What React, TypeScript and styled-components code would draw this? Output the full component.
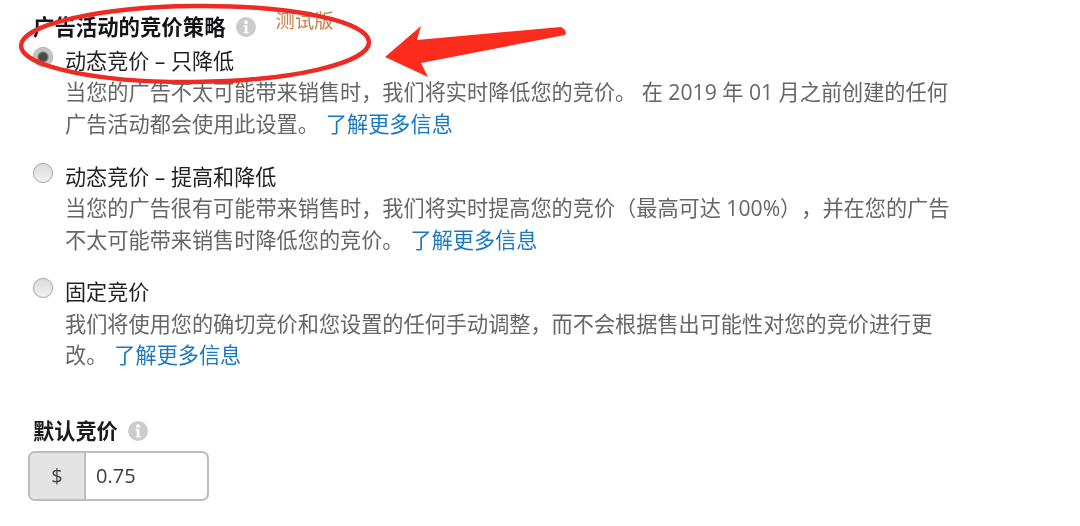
import React from "react"
import styled, { createGlobalStyle } from "styled-components"

const GlobalStyle = createGlobalStyle`
  html, body {
    margin: 0;
    padding: 0;
    background: #fff;
  }

  body {
    font-family: "Open Sans", "Noto Sans CJK SC", sans-serif;
    text-spacing-trim: space-all;
    overflow: hidden;
  }
`

const Page = styled.div`
  position: relative;
  width: 1080px;
  height: 526px;
  padding: 12px 0 0 33px;
  box-sizing: border-box;
  overflow: hidden;
`

const Content = styled.div`
  filter: blur(0.55px);
`

const TitleRow = styled.div`
  display: flex;
  align-items: center;
  height: 30px;
`

const Title = styled.h4`
  margin: 0;

  color: #141418;
  font-size: 21.4px;
  font-weight: 700;
  line-height: 30px;
`

const InfoIcon = styled.svg`
  flex: none;
  width: 20px;
  height: 20px;
  margin-left: 10px;
`

const BetaTag = styled.span`
  align-self: flex-start;
  margin: -3px 0 0 20px;

  color: #c9814a;
  font-size: 19.4px;
  line-height: 24px;
`

const OptionList = styled.div`
  display: flex;
  flex-direction: column;
  gap: 21.5px;
  margin-top: 3px;
`

const Option = styled.div`
  display: flex;
  gap: 12px;
`

const Radio = styled.span<{ $checked?: boolean }>`
  flex: none;
  width: 20px;
  height: 20px;
  margin-top: 2px;
  border-radius: 50%;
  box-sizing: border-box;
  border: 1px solid #aaa;
  background: ${({ $checked }) =>
    $checked
      ? "radial-gradient(circle, #4a4a4a 0 4px, #bdbdbd 6px, #e2e2e2 100%)"
      : "linear-gradient(#dcdcdc, #f0f0f0)"};
  box-shadow: 0 0 1px #bbb;
`

const OptionBody = styled.div`
  width: 892px;
`

const OptionLabel = styled.div`
  color: #1f1f1f;
  font-size: 21.1px;
  line-height: 31.4px;
`

const OptionText = styled.p`
  margin: 0;

  color: #666;
  font-size: 21.17px;
  line-height: 31.4px;
`

const MoreLink = styled.a`
  margin-left: 7px;

  color: #1a78c2;
  text-decoration: none;
`

const BidSection = styled.div`
  margin-top: 45px;
`

const BidLabelRow = styled.div`
  display: flex;
  align-items: center;
  height: 30px;
`

const BidLabel = styled.h4`
  margin: 0;

  color: #1d1820;
  font-size: 21.2px;
  font-weight: 700;
  line-height: 30px;
`

const BidInput = styled.div`
  display: flex;
  width: 181px;
  height: 50px;
  margin: 5px 0 0 -5px;
  box-sizing: border-box;

  border: 2px solid #bdbdbd;
  border-radius: 7px;
  overflow: hidden;
`

const Currency = styled.span`
  display: flex;
  align-items: center;
  justify-content: center;
  width: 54px;

  background: #e4e4e4;
  border-right: 2px solid #bdbdbd;

  color: #444;
  font-size: 20px;
`

const BidValue = styled.span`
  display: flex;
  align-items: center;
  padding-left: 10px;

  color: #3c3c3c;
  font-size: 20px;
`

const Annotation = styled.svg`
  position: absolute;
  top: 0;
  left: 0;
  width: 1080px;
  height: 526px;
  pointer-events: none;
`

function Info() {
  return (
    <InfoIcon viewBox="0 0 20 20">
      <circle cx="10" cy="10" r="10" fill="#cccccc" />
      <circle cx="10" cy="5.2" r="1.9" fill="#fff" />
      <path d="M7.8 8.3h3.6v6.6h1.2v1.4H7.6v-1.4h1.2V9.7h-1z" fill="#fff" />
    </InfoIcon>
  )
}

const options = [
  {
    label: "动态竞价 – 只降低",
    text: "当您的广告不太可能带来销售时，我们将实时降低您的竞价。 在 2019 年 01 月之前创建的任何广告活动都会使用此设置。",
    checked: true,
  },
  {
    label: "动态竞价 – 提高和降低",
    text: "当您的广告很有可能带来销售时，我们将实时提高您的竞价（最高可达 100%），并在您的广告不太可能带来销售时降低您的竞价。",
  },
  {
    label: "固定竞价",
    text: "我们将使用您的确切竞价和您设置的任何手动调整，而不会根据售出可能性对您的竞价进行更改。",
  },
]

export default function App() {
  return (
    <Page>
      <GlobalStyle />
      <Content>
        <TitleRow>
          <Title>广告活动的竞价策略</Title>
          <Info />
          <BetaTag>测试版</BetaTag>
        </TitleRow>
        <OptionList>
          {options.map((option) => (
            <Option key={option.label}>
              <Radio $checked={option.checked} />
              <OptionBody>
                <OptionLabel>{option.label}</OptionLabel>
                <OptionText>
                  {option.text}
                  <MoreLink href="#">了解更多信息</MoreLink>
                </OptionText>
              </OptionBody>
            </Option>
          ))}
        </OptionList>
        <BidSection>
          <BidLabelRow>
            <BidLabel>默认竞价</BidLabel>
            <Info />
          </BidLabelRow>
          <BidInput>
            <Currency>$</Currency>
            <BidValue>0.75</BidValue>
          </BidInput>
        </BidSection>
      </Content>
      <Annotation viewBox="0 0 1080 526">
        <ellipse
          cx="195"
          cy="44"
          rx="174"
          ry="38"
          fill="none"
          stroke="#ee2a24"
          strokeWidth="4.5"
          transform="rotate(-0.6 195 44)"
        />
        <path
          d="M385 57 L421 26 L417 40 L561 27 Q568 31 565 35 L421 63 L428 77 Z"
          fill="#fb2c1e"
        />
      </Annotation>
    </Page>
  )
}
